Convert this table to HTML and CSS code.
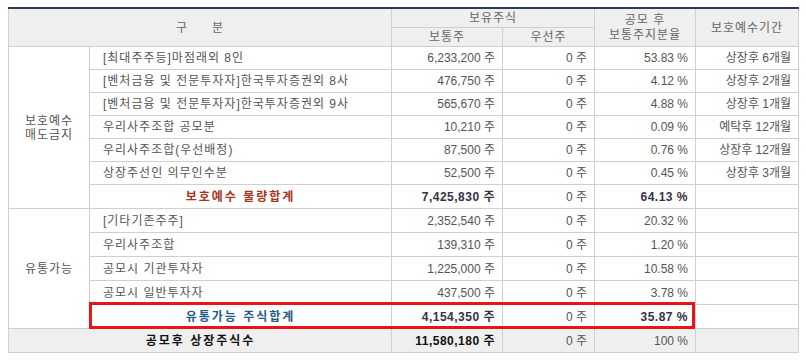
FILE: index.html
```html
<!DOCTYPE html>
<html lang="ko">
<head>
<meta charset="utf-8">
<link rel="stylesheet" href="styles.css">
</head>
<body>
<div class="wrap">
<table class="lockup">
  <colgroup>
    <col class="c0"><col class="c1"><col class="c2"><col class="c3"><col class="c4"><col class="c5">
  </colgroup>
  <thead>
    <tr class="h1">
      <th colspan="2" rowspan="2" class="gubun">구<span class="gap"></span>분</th>
      <th colspan="2">보유주식</th>
      <th rowspan="2" class="two">공모 후<br>보통주지분율</th>
      <th rowspan="2">보호예수기간</th>
    </tr>
    <tr class="h2">
      <th>보통주</th>
      <th>우선주</th>
    </tr>
  </thead>
  <tbody>
    <tr>
      <td rowspan="7" class="grp">보호예수<br>매도금지</td>
      <td class="name">[최대주주등]마점래외 8인</td>
      <td class="num">6,233,200 주</td><td class="num">0 주</td><td class="num">53.83 %</td><td class="num">상장후 6개월</td>
    </tr>
    <tr>
      <td class="name">[벤처금융 및 전문투자자]한국투자증권외 8사</td>
      <td class="num">476,750 주</td><td class="num">0 주</td><td class="num">4.12 %</td><td class="num">상장후 2개월</td>
    </tr>
    <tr>
      <td class="name">[벤처금융 및 전문투자자]한국투자증권외 9사</td>
      <td class="num">565,670 주</td><td class="num">0 주</td><td class="num">4.88 %</td><td class="num">상장후 1개월</td>
    </tr>
    <tr>
      <td class="name">우리사주조합 공모분</td>
      <td class="num">10,210 주</td><td class="num">0 주</td><td class="num">0.09 %</td><td class="num">예탁후 12개월</td>
    </tr>
    <tr>
      <td class="name">우리사주조합(우선배정)</td>
      <td class="num">87,500 주</td><td class="num">0 주</td><td class="num">0.76 %</td><td class="num">상장후 12개월</td>
    </tr>
    <tr>
      <td class="name">상장주선인 의무인수분</td>
      <td class="num">52,500 주</td><td class="num">0 주</td><td class="num">0.45 %</td><td class="num">상장후 3개월</td>
    </tr>
    <tr class="sub">
      <td class="subname red">보호예수 물량합계</td>
      <td class="num strong">7,425,830 주</td><td class="num">0 주</td><td class="num strong">64.13 %</td><td></td>
    </tr>
    <tr class="tall">
      <td rowspan="5" class="grp">유통가능</td>
      <td class="name">[기타기존주주]</td>
      <td class="num">2,352,540 주</td><td class="num">0 주</td><td class="num">20.32 %</td><td></td>
    </tr>
    <tr class="tall">
      <td class="name">우리사주조합</td>
      <td class="num">139,310 주</td><td class="num">0 주</td><td class="num">1.20 %</td><td></td>
    </tr>
    <tr class="tall">
      <td class="name">공모시 기관투자자</td>
      <td class="num">1,225,000 주</td><td class="num">0 주</td><td class="num">10.58 %</td><td></td>
    </tr>
    <tr class="tall">
      <td class="name">공모시 일반투자자</td>
      <td class="num">437,500 주</td><td class="num">0 주</td><td class="num">3.78 %</td><td></td>
    </tr>
    <tr class="sub tall">
      <td class="subname blue">유통가능 주식합계</td>
      <td class="num strong">4,154,350 주</td><td class="num">0 주</td><td class="num strong">35.87 %</td><td></td>
    </tr>
    <tr class="total tall">
      <td colspan="2" class="totname">공모후 상장주식수</td>
      <td class="num strong black">11,580,180 주</td><td class="num">0 주</td><td class="num">100 %</td><td></td>
    </tr>
  </tbody>
</table>
<div class="highlight"></div>
</div>
</body>
</html>
```

FILE: styles.css
```css
html, body {
  margin: 0;
  padding: 0;
  background: #ffffff;
}

body {
  padding: 7px 8px;
  font-family: "Liberation Sans", "Noto Sans CJK KR", sans-serif;
  font-size: 12px;
  color: #555555;
}

.wrap {
  position: relative;
  width: 790px;
}

.lockup {
  width: 790px;
  border-collapse: collapse;
  table-layout: fixed;
  border-top: 2px solid #2b3b58;
}

.c0 { width: 81px; }
.c1 { width: 302px; }
.c2 { width: 111px; }
.c3 { width: 92px; }
.c4 { width: 101px; }
.c5 { width: 103px; }

th, td {
  border: 1px solid #cfcfcf;
  padding: 0 7px 0 8px;
  line-height: 14px;
  white-space: nowrap;
}

th {
  background: #efefef;
  font-weight: normal;
  color: #666666;
  text-align: center;
  height: 18px;
  padding: 0;
  letter-spacing: 1px;
}

th.two {
  line-height: 15px;
}

.gubun .gap {
  display: inline-block;
  width: 24px;
}

tbody tr td {
  height: 22px;
}

tbody tr.tall td {
  height: 23px;
}

.sub td {
  height: 23px;
}

.grp {
  text-align: center;
  vertical-align: middle;
  padding: 0;
  letter-spacing: 1px;
}

.name {
  padding-left: 13px;
  text-align: left;
  letter-spacing: 1px;
}

.num {
  text-align: right;
}

.subname {
  text-align: center;
  font-weight: bold;
  padding: 0;
  letter-spacing: 2px;
}

.red { color: #a8341a; }
.blue { color: #1f5d86; }

.strong {
  font-weight: bold;
  color: #333344;
  letter-spacing: 0.5px;
}

.black { color: #111111; }

.total td {
  background: #efefef;
}

.totname {
  text-align: center;
  font-weight: bold;
  color: #111111;
  letter-spacing: 2px;
}

.highlight {
  position: absolute;
  left: 81px;
  top: 295px;
  width: 600px;
  height: 21px;
  border: 3px solid #e8141a;
  pointer-events: none;
}
```
